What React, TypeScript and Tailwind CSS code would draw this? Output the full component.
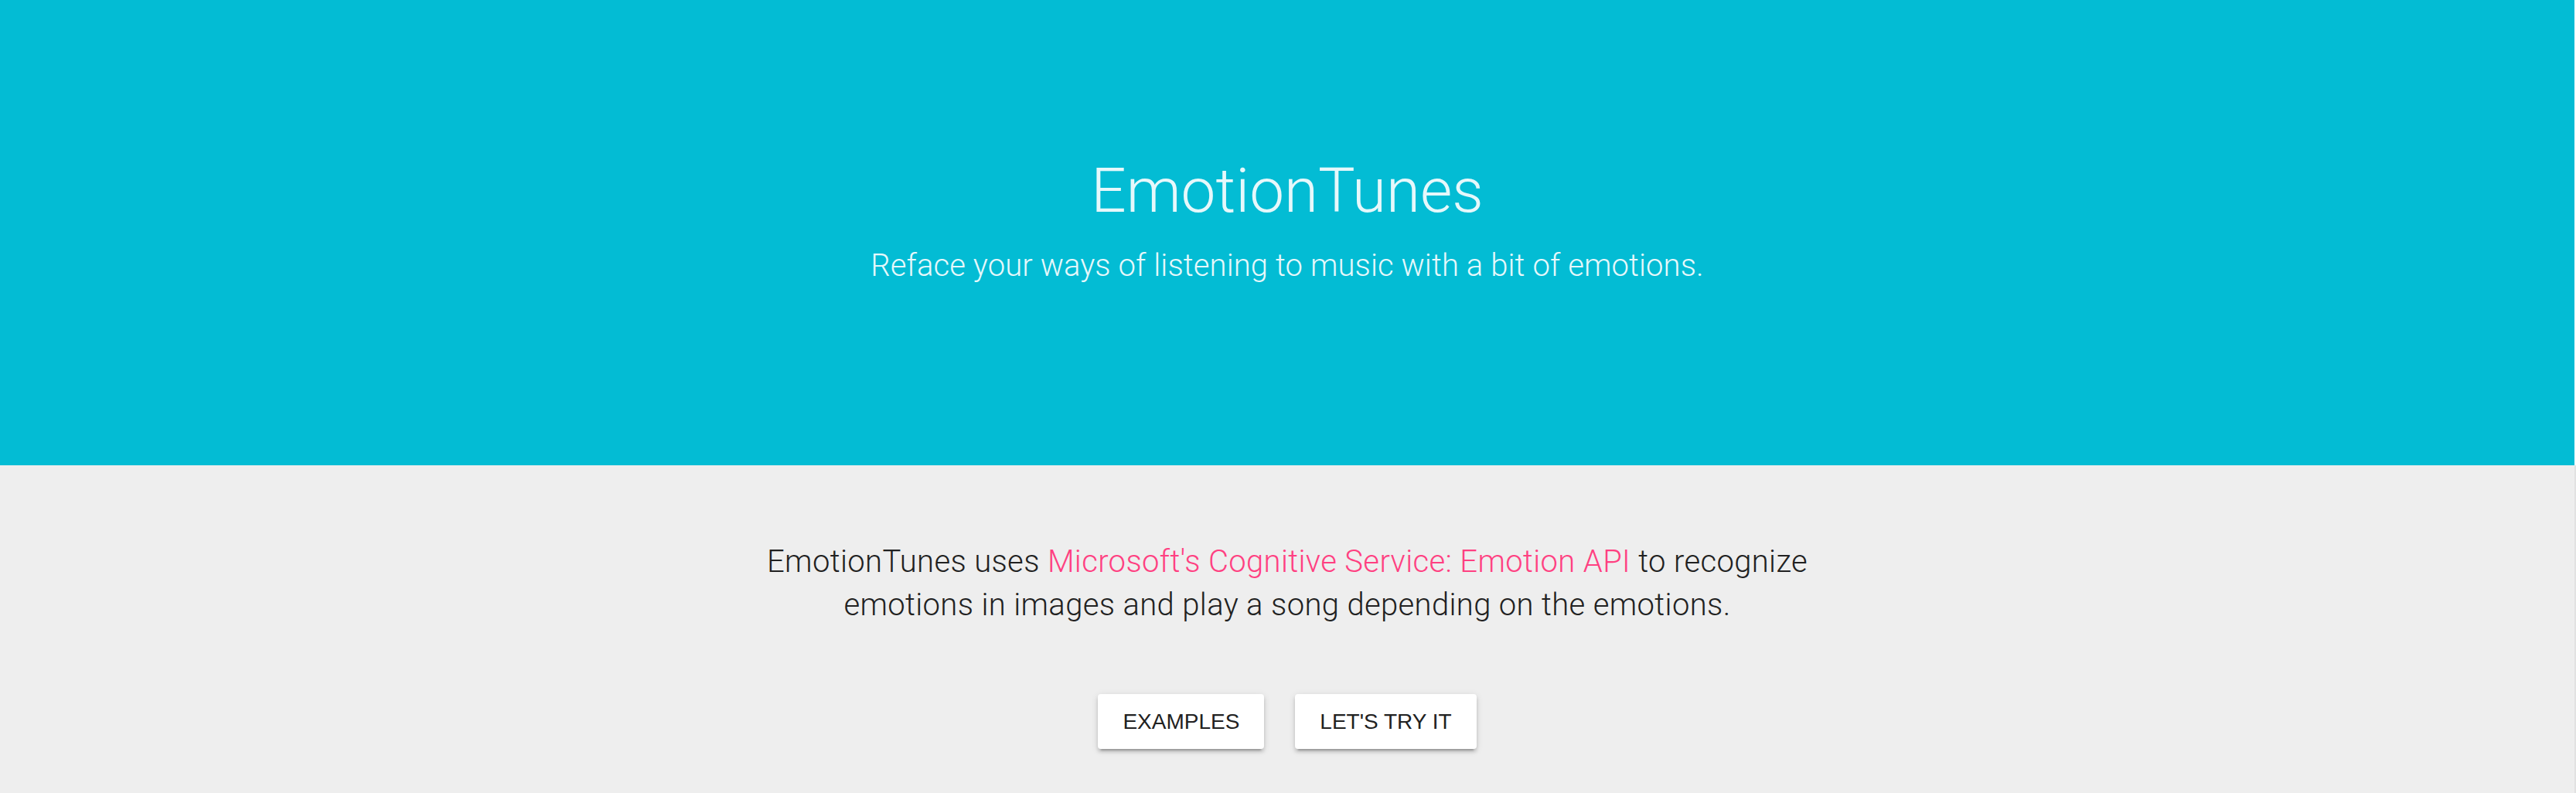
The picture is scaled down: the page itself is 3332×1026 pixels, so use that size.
import React from 'react';

const App = () => {
  return (
    <div className="flex w-full min-h-[1026px] bg-[#eeeeee]" style={{ fontFamily: '"Helvetica Neue", Roboto, "Liberation Sans", sans-serif' }}>
      <div className="flex-1 flex flex-col">
        {/* Hero */}
        <header className="h-[602px] bg-[#03bcd4] text-[#e6f8fb] flex flex-col items-center pt-[207px]">
          <h1 className="text-[80px] leading-[80px] font-light">EmotionTunes</h1>
          <p className="mt-[33px] text-[40px] leading-[48px] font-light tracking-[0.1px]">
            Reface your ways of listening to music with a bit of emotions.
          </p>
        </header>

        {/* Intro */}
        <main className="flex flex-col items-center pt-[97px] text-[#212121]">
          <p className="text-center text-[40px] leading-[56px] font-light tracking-[0.35px]">
            EmotionTunes uses{' '}
            <a href="#" className="text-[#ff4081]">
              Microsoft's Cognitive Service: Emotion API
            </a>{' '}
            to recognize
            <br />
            emotions in images and play a song depending on the emotions.
          </p>

          <div className="mt-[87px] flex gap-[40px]">
            <button className="h-[71px] px-[32px] bg-white rounded-[4px] text-[28px] text-[#212121] uppercase shadow-[0_4px_4px_0_rgba(0,0,0,0.14),0_6px_2px_-4px_rgba(0,0,0,0.2),0_2px_10px_0_rgba(0,0,0,0.12)]" style={{ fontFamily: '"Liberation Sans", sans-serif' }}>
              Examples
            </button>
            <button className="h-[71px] px-[32px] bg-white rounded-[4px] text-[28px] text-[#212121] uppercase shadow-[0_4px_4px_0_rgba(0,0,0,0.14),0_6px_2px_-4px_rgba(0,0,0,0.2),0_2px_10px_0_rgba(0,0,0,0.12)]" style={{ fontFamily: '"Liberation Sans", sans-serif' }}>
              Let's try it
            </button>
          </div>
        </main>
      </div>

      {/* scrollbar gutter */}
      <div className="w-[2px] flex flex-col">
        <div className="h-[602px] bg-white" />
        <div className="flex-1 bg-[#e2e2e2]" />
      </div>
    </div>
  );
};

export default App;
